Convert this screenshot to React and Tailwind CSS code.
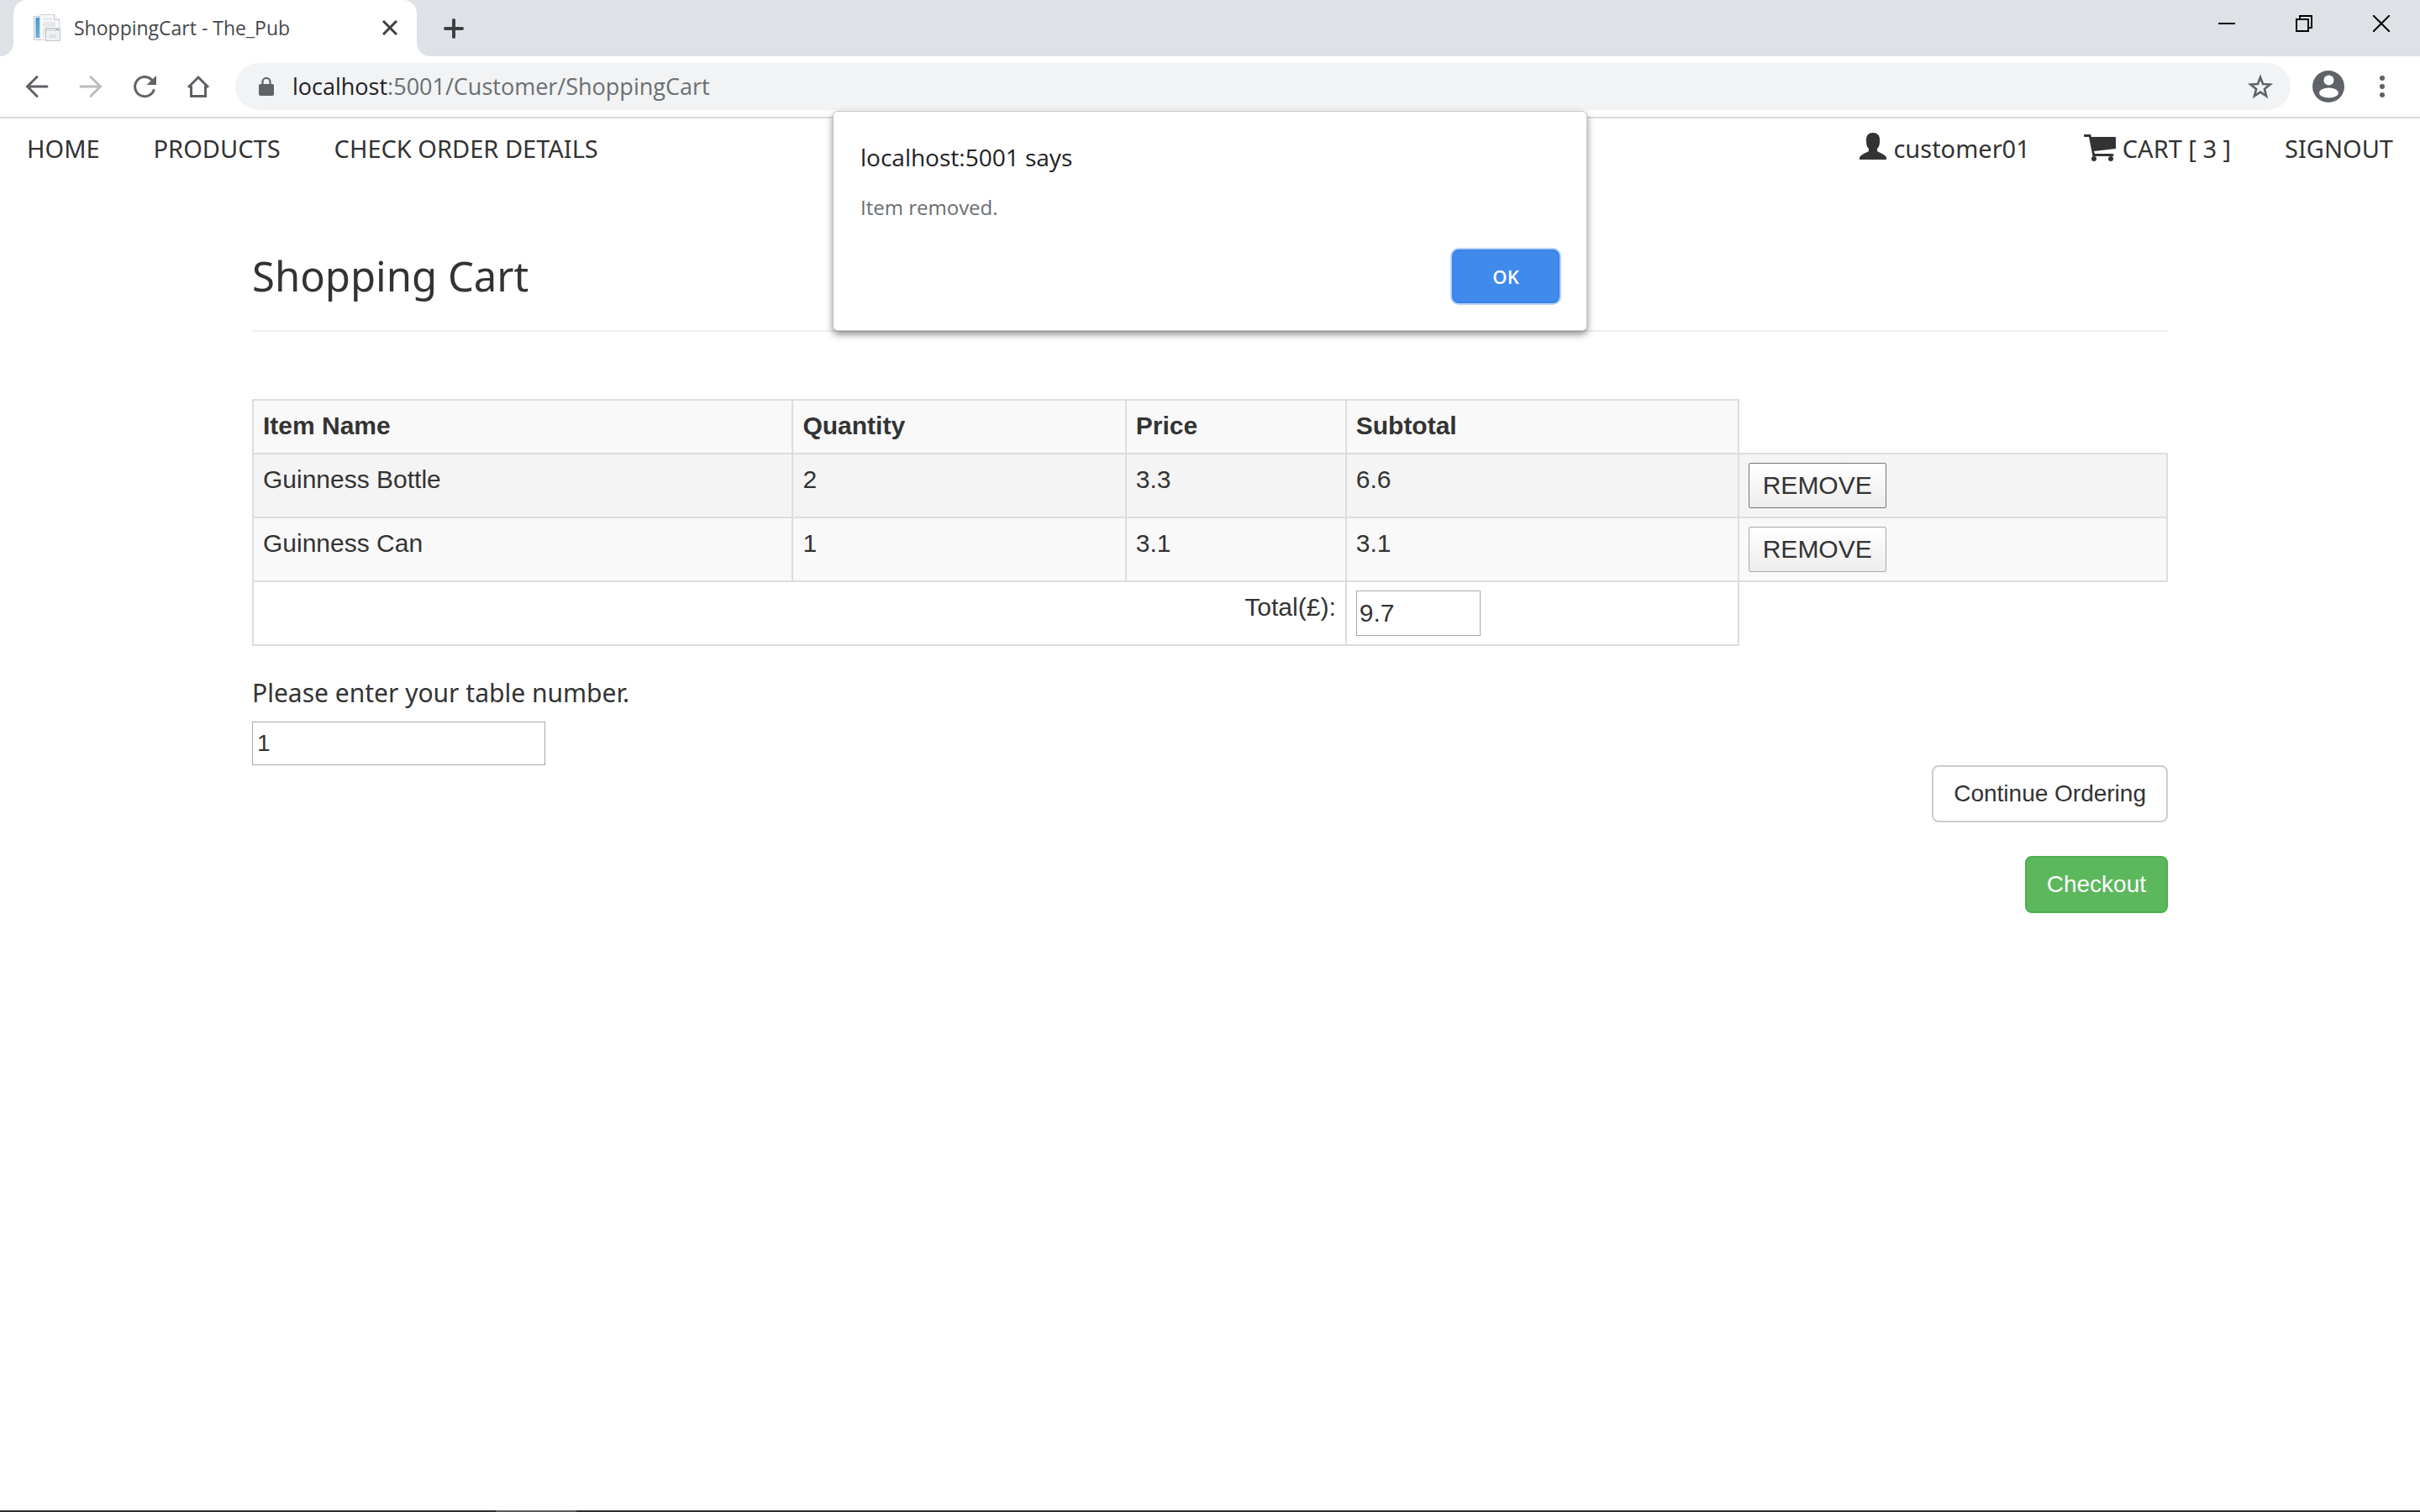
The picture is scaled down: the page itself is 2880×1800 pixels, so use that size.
const navLink = "text-[29px] leading-10 text-[#333]";

const items = [
  { name: "Guinness Bottle", quantity: 2, price: "3.3", subtotal: "6.6", row: "bg-[#f4f4f4]", edge: "border-[#767676]" },
  { name: "Guinness Can", quantity: 1, price: "3.1", subtotal: "3.1", row: "bg-[#f9f9f9]", edge: "border-[#a9a9a9]" },
];

const cell = "border-2 border-[#ddd] px-[11px] pt-2.5 align-top";

function Favicon() {
  return (
    <svg width="32" height="32" viewBox="0 0 32 32" aria-hidden="true">
      <defs>
        <linearGradient id="fav-blue" x1="0" y1="0" x2="1" y2="1">
          <stop offset="0" stopColor="#3f8fca" />
          <stop offset="1" stopColor="#7cc0e8" />
        </linearGradient>
      </defs>
      <path d="M0.5 2.5h9v28h-9z" fill="#f4f5f6" stroke="#c4c8cc" />
      <path d="M2.500 4h6v24h-6z" fill="url(#fav-blue)" />
      <path d="M7.5 0.5h17l6 6v24h-23z" fill="#f7f8f9" stroke="#d3d6da" />
      <path d="M24.500 .5v6h6" fill="#fff" stroke="#b9bdc2" />
      <path d="M11 4h11v3H11zM11 9h15v6H11zM11 17h4v10h-4z" fill="#e6e9ec" />
      <path d="M14.500 16.500h17v15h-17z" fill="#eff0f2" stroke="#c0c4c8" />
      <path d="M15 17h16v3H15z" fill="#dcdfe2" />
      <path d="M26 18h4v1h-4z" fill="#8f959b" />
      <path d="M19 24h8v4h-8z" fill="#dde0e4" />
    </svg>
  );
}

function WindowControls() {
  return (
    <div className="ml-auto flex h-[56px] items-center">
      <button aria-label="Minimize" className="flex h-full w-[92px] items-center justify-center">
        <svg width="20" height="20" viewBox="0 0 20 20" fill="none" stroke="#000" strokeWidth="2"><path d="M0 10h20" /></svg>
      </button>
      <button aria-label="Restore" className="flex h-full w-[92px] items-center justify-center">
        <svg width="20" height="20" viewBox="0 0 20 20" fill="none" stroke="#000" strokeWidth="2"><path d="M1 5h14v14H1zM5 5V1h14v14h-4" /></svg>
      </button>
      <button aria-label="Close window" className="flex h-full w-[92px] items-center justify-center">
        <svg width="20" height="20" viewBox="0 0 20 20" fill="none" stroke="#000" strokeWidth="2"><path d="M0 0l20 20M20 0L0 20" /></svg>
      </button>
    </div>
  );
}

function TabStrip() {
  return (
    <div className="flex h-[67px] items-stretch bg-[#dee1e6]">
      <svg width="16" height="67" viewBox="0 0 16 67" className="shrink-0" aria-hidden="true"><path d="M16 51a16 16 0 0 1-16 16h16z" fill="#fff" /></svg>
      <div className="flex w-[480px] items-center rounded-t-[16px] bg-white pr-5 pb-px pl-6">
        <Favicon />
        <span className="ml-4 font-['Open_Sans',sans-serif] text-[23px] leading-8 text-[#45484c]">ShoppingCart - The_Pub</span>
        <button aria-label="Close tab" className="ml-auto flex h-6 w-6 items-center justify-center">
          <svg width="18" height="18" viewBox="0 0 18 18" fill="none" stroke="#3c4043" strokeWidth="3"><path d="M1 1l16 16M17 1L1 17" /></svg>
        </button>
      </div>
      <svg width="16" height="67" viewBox="0 0 16 67" className="shrink-0" aria-hidden="true"><path d="M0 51a16 16 0 0 0 16 16H0z" fill="#fff" /></svg>
      <button aria-label="New tab" className="ml-4 flex w-6 items-center justify-center">
        <svg width="24" height="24" viewBox="0 0 24 24" fill="none" stroke="#3c4043" strokeWidth="4" strokeLinecap="round"><path d="M12 2v20M2 12h20" /></svg>
      </button>
      <WindowControls />
    </div>
  );
}

function Toolbar() {
  return (
    <div className="flex h-[74px] items-center border-b-2 border-[#dadce0] bg-white pr-7 pl-7">
      <div className="flex items-center gap-8 text-[#5f6368]">
        <button aria-label="Back" className="h-8 w-8">
          <svg width="32" height="32" viewBox="0 0 32 32" fill="none" stroke="currentColor" strokeWidth="3" strokeLinecap="round"><path d="M28 16H5M16 4.500L4.500 16 16 27.500" /></svg>
        </button>
        <button aria-label="Forward" className="h-8 w-8 text-[#babcbe]">
          <svg width="32" height="32" viewBox="0 0 32 32" fill="none" stroke="currentColor" strokeWidth="3" strokeLinecap="round"><path d="M4 16h23M16 4.500L27.500 16 16 27.500" /></svg>
        </button>
        <button aria-label="Reload" className="h-8 w-8">
          <svg width="32" height="32" viewBox="0 0 32 32" fill="none" stroke="currentColor" strokeWidth="3" strokeLinecap="round"><path d="M27 20.500A11.600 11.600 0 1 1 24.500 8" /><path d="M30 3v11H18.500z" fill="currentColor" stroke="none" /></svg>
        </button>
        <button aria-label="Home" className="h-8 w-8">
          <svg width="32" height="32" viewBox="0 0 32 32" fill="none" stroke="currentColor" strokeWidth="3"><path d="M4 17L16 5l12 12M7.500 15v12.500h17V15" /></svg>
        </button>
      </div>
      <div className="ml-7 flex h-14 flex-1 items-center rounded-full bg-[#f1f3f4] pr-5 pl-7">
        <svg width="18" height="22" viewBox="0 0 18 22" className="shrink-0" aria-hidden="true"><path d="M2 8h14a2 2 0 0 1 2 2v10a2 2 0 0 1-2 2H2a2 2 0 0 1-2-2V10a2 2 0 0 1 2-2z" fill="#5f6368" /><path d="M4.500 9V5.500a4.500 4.500 0 0 1 9 0V9" fill="none" stroke="#5f6368" strokeWidth="2.200" /></svg>
        <div role="textbox" aria-label="Address" className="ml-[22px] flex-1 font-['Open_Sans',sans-serif] text-[27px] leading-9 text-[#6b6e72]">
          <span className="text-[#202124]">localhost</span>:5001/Customer/ShoppingCart
        </div>
        <button aria-label="Bookmark" className="h-8 w-8">
          <svg width="32" height="32" viewBox="0 0 32 32" fill="none" stroke="#5f6368" strokeWidth="2.600"><path d="M16 5l3 8 8.600.500-6.700 5.400 2.200 8.400L16 22.600l-7.100 4.700 2.200-8.400-6.700-5.400L13 13z" /></svg>
        </button>
      </div>
      <button aria-label="Profile" className="ml-[26px] h-[38px] w-[38px]">
        <svg width="38" height="38" viewBox="0 0 38 38"><circle cx="19" cy="19" r="19" fill="#5f6368" /><circle cx="19.500" cy="11.500" r="6" fill="#fff" /><ellipse cx="19.500" cy="26.500" rx="11.500" ry="6" fill="#fff" /></svg>
      </button>
      <button aria-label="Menu" className="ml-7 h-8 w-[34px]">
        <svg width="34" height="32" viewBox="0 0 34 32" fill="#5f6368"><circle cx="17" cy="6" r="3" /><circle cx="17" cy="16" r="3" /><circle cx="17" cy="26" r="3" /></svg>
      </button>
    </div>
  );
}

function SiteNav() {
  return (
    <nav className="flex items-center justify-between px-8 pt-4 font-['Noto_Sans',sans-serif]">
      <div className="flex gap-16">
        <a href="#home" className={navLink}>HOME</a>
        <a href="#products" className={navLink}>PRODUCTS</a>
        <a href="#orders" className={navLink}>CHECK ORDER DETAILS</a>
      </div>
      <div className="flex items-center gap-16">
        <a href="#account" className={"flex items-center gap-2 " + navLink}>
          <svg width="32" height="38" viewBox="0 0 32 38" fill="#333" aria-hidden="true"><path d="M16 0c5 0 8 3 8 8v3c0 4-1.500 6.500-3 8v2.500c0 1.500 11 4.500 11 8.500v2H0v-2c0-4 11-7 11-8.500V19c-1.500-1.500-3-4-3-8V8c0-5 3-8 8-8z" /></svg>
          customer01
        </a>
        <a href="#cart" className={"flex items-center gap-2 " + navLink}>
          <svg width="38" height="34" viewBox="0 0 38 34" fill="#333" aria-hidden="true"><path d="M1 0h7l1 3h28a1 1 0 0 1 1 1v13L12 20l1 3h21a1.500 1.500 0 0 1 0 3H10.500L6 3H1a1.500 1.500 0 0 1 0-3z" /><circle cx="12" cy="29" r="3" /><circle cx="32" cy="29" r="3" /></svg>
          CART [ 3 ]
        </a>
        <a href="#signout" className={navLink}>SIGNOUT</a>
      </div>
    </nav>
  );
}

function CartTable() {
  return (
    <table className="mt-20 w-full table-fixed border-collapse text-[30px] leading-10">
      <colgroup>
        <col className="w-[28.2%]" />
        <col className="w-[17.4%]" />
        <col className="w-[11.5%]" />
        <col className="w-[20.5%]" />
        <col className="w-[22.4%]" />
      </colgroup>
      <thead>
        <tr>
          {["Item Name", "Quantity", "Price", "Subtotal"].map((h) => (
            <th key={h} scope="col" className={cell + " bg-[#f9f9f9] pb-3 text-left font-bold"}>{h}</th>
          ))}
        </tr>
      </thead>
      <tbody>
        {items.map((it) => (
          <tr key={it.name} className={it.row}>
            <td className={cell}>{it.name}</td>
            <td className={cell}>{it.quantity}</td>
            <td className={cell}>{it.price}</td>
            <td className={cell}>{it.subtotal}</td>
            <td className={cell + " pb-2.5"}>
              <button className={"block h-[54px] rounded-[2px] border bg-linear-to-b from-white to-[#ededed] px-4 " + it.edge}>REMOVE</button>
            </td>
          </tr>
        ))}
        <tr>
          <td colSpan={3} className={cell + " text-right"}>
            <label htmlFor="total">Total(£):</label>
          </td>
          <td className={cell + " pb-2.5"}>
            <input id="total" type="text" defaultValue="9.7" className="block h-[54px] w-[148px] border border-[#a9a9a9] bg-white px-[3px]" />
          </td>
        </tr>
      </tbody>
    </table>
  );
}

function AlertDialog() {
  return (
    <div role="alertdialog" aria-labelledby="alert-title" aria-describedby="alert-text" className="absolute top-[132px] left-1/2 flex w-[898px] -translate-x-1/2 flex-col rounded-[6px] border border-[#c4c4c4] bg-white px-8 pt-[34px] pb-8 font-['Open_Sans',sans-serif] shadow-[0_4px_8px_rgba(0,0,0,0.45)]">
      <h2 id="alert-title" className="text-[28px] leading-10 text-[#202124]">localhost:5001 says</h2>
      <p id="alert-text" className="mt-6 text-[24px] leading-8 text-[#6b6e72]">Item removed.</p>
      <button className="mt-[34px] h-16 w-32 self-end rounded-[8px] border-2 border-[#3a80e6] bg-[#408aec] text-[22px] font-semibold text-white ring-2 ring-[#b5d2f9]">OK</button>
    </div>
  );
}

export default function App() {
  return (
    <div className="relative flex min-h-screen flex-col bg-white font-['Liberation_Sans',Arial,sans-serif] text-[#333]">
      <TabStrip />
      <Toolbar />
      <SiteNav />
      <main className="mx-auto w-full max-w-[2340px] flex-1 px-[30px] pt-[98px]">
        <h1 className="font-['Noto_Sans',sans-serif] text-[49px] leading-[66px]">Shopping Cart</h1>
        <hr className="mt-8 border-t-2 border-[#eee]" />
        <CartTable />
        <form className="flex flex-col items-start">
          <label htmlFor="table-number" className="mt-9 font-['Noto_Sans',sans-serif] text-[30px] leading-10">Please enter your table number.</label>
          <input id="table-number" type="text" defaultValue="1" className="mt-[14px] h-[52px] w-[349px] border border-[#a9a9a9] px-[5px] text-[28px]" />
          <button type="button" className="h-[68px] self-end rounded-[8px] border-2 border-[#ccc] bg-white px-6 text-[28px]">Continue Ordering</button>
          <button type="submit" className="mt-10 h-[68px] self-end rounded-[8px] border-2 border-[#4cae4c] bg-[#5cb85c] px-6 text-[28px] text-white">Checkout</button>
        </form>
      </main>
      <div className="flex h-[2px] bg-[#2f2c2e] pl-[590px]"><div className="w-24 bg-[#5b595b]" /></div>
      <AlertDialog />
    </div>
  );
}
